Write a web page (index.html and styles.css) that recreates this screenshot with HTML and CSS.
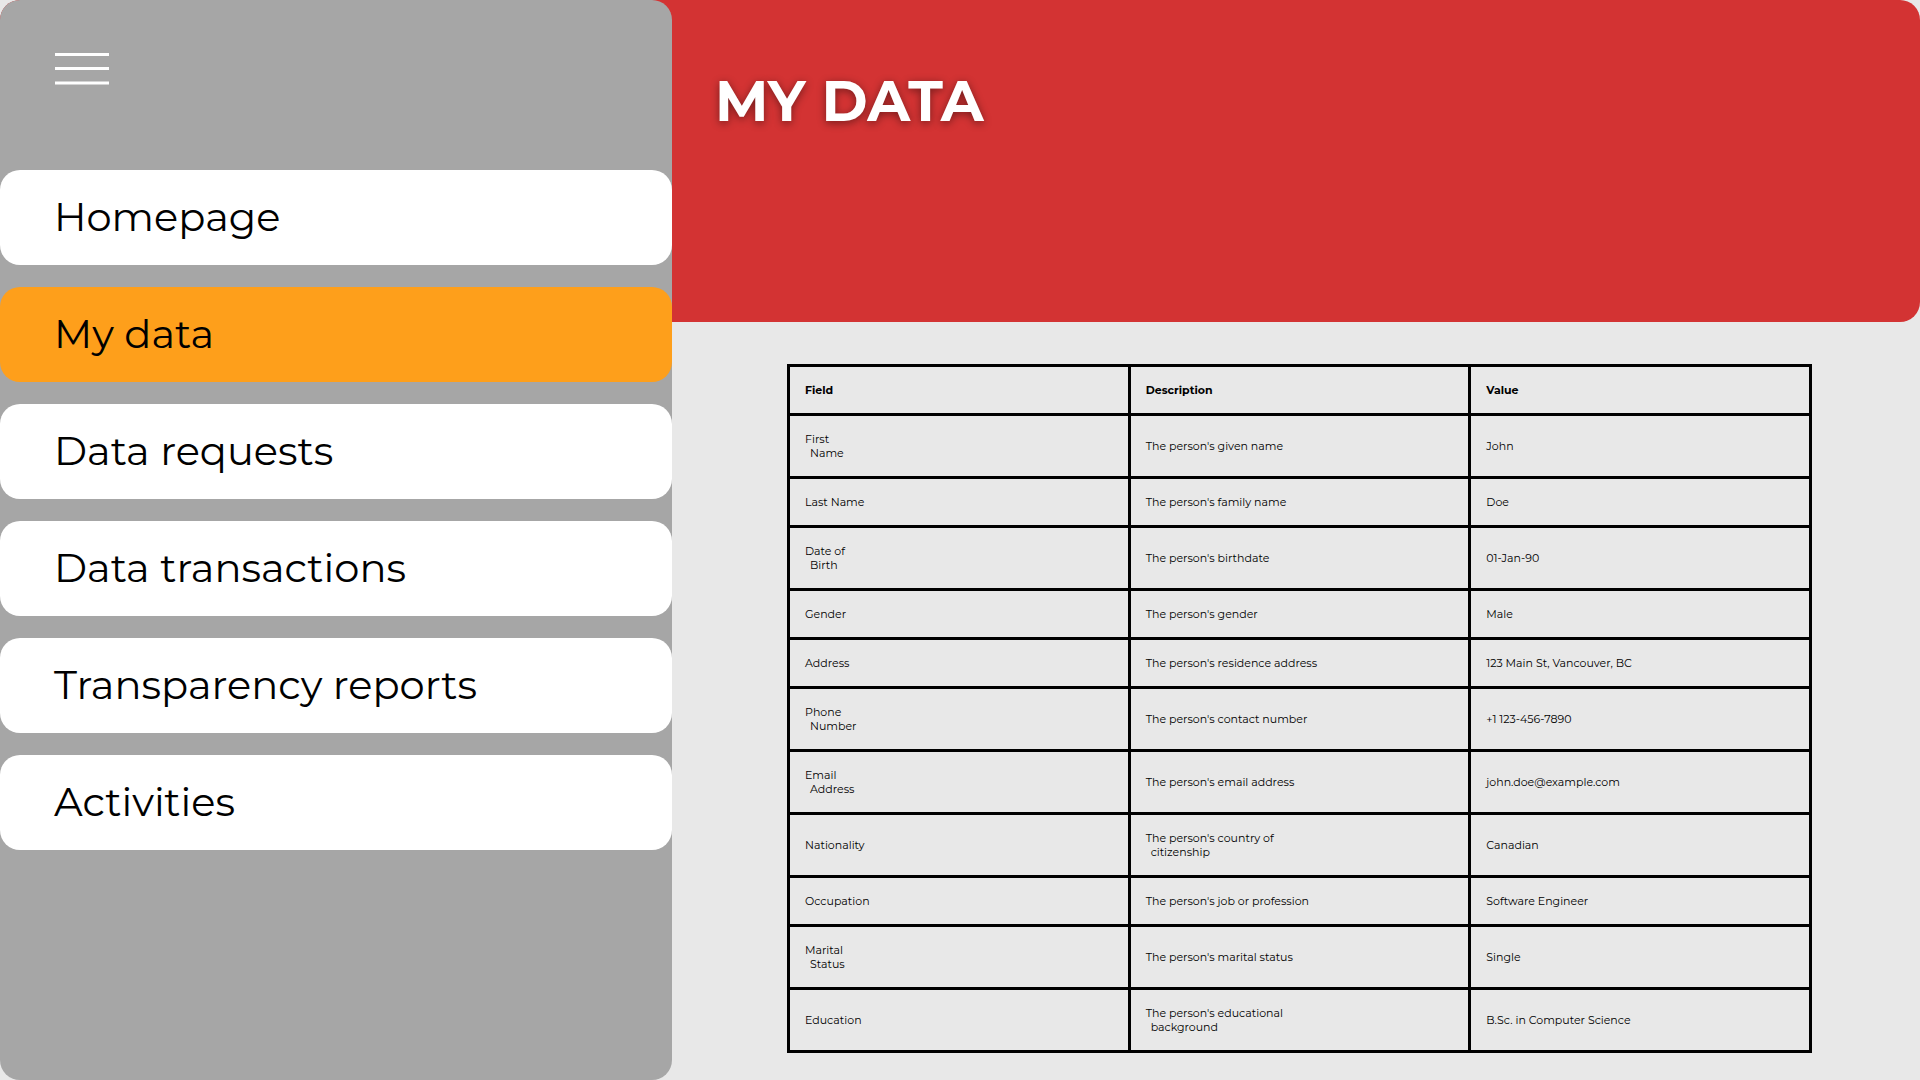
FILE: index.html
```html
<!DOCTYPE html>
<html lang="en">
<head>
<meta charset="utf-8">
<meta name="viewport" content="width=device-width, initial-scale=1">
<title>My data</title>
<link rel="stylesheet" href="styles.css">
</head>
<body>
<div class="layout">
  <header class="banner">
    <h1 class="banner-title">MY DATA</h1>
  </header>
  <aside class="sidebar">
    <button class="menu-button" type="button" aria-label="Toggle menu">
      <svg class="menu-icon" viewBox="0 0 54 32" aria-hidden="true">
        <path d="M0 1.500H54M0 15.500H54M0 30H54" stroke="#fff" stroke-width="3"/>
      </svg>
    </button>
    <nav class="nav" aria-label="Main">
      <a class="nav-link" href="#home">Homepage</a>
      <a class="nav-link nav-link-active" href="#my-data" aria-current="page">My data</a>
      <a class="nav-link" href="#requests">Data requests</a>
      <a class="nav-link" href="#transactions">Data transactions</a>
      <a class="nav-link" href="#reports">Transparency reports</a>
      <a class="nav-link" href="#activities">Activities</a>
    </nav>
  </aside>
  <main class="content">
    <table class="data-table">
      <thead>
        <tr><th scope="col">Field</th><th scope="col">Description</th><th scope="col">Value</th></tr>
      </thead>
      <tbody>
        <tr><td>First <span class="second-line">Name</span></td><td>The person's given name</td><td>John</td></tr>
        <tr><td>Last Name</td><td>The person's family name</td><td>Doe</td></tr>
        <tr><td>Date of <span class="second-line">Birth</span></td><td>The person's birthdate</td><td>01-Jan-90</td></tr>
        <tr><td>Gender</td><td>The person's gender</td><td>Male</td></tr>
        <tr><td>Address</td><td>The person's residence address</td><td>123 Main St, Vancouver, BC</td></tr>
        <tr><td>Phone <span class="second-line">Number</span></td><td>The person's contact number</td><td>+1 123-456-7890</td></tr>
        <tr><td>Email <span class="second-line">Address</span></td><td>The person's email address</td><td>john.doe@example.com</td></tr>
        <tr><td>Nationality</td><td>The person's country of <span class="second-line">citizenship</span></td><td>Canadian</td></tr>
        <tr><td>Occupation</td><td>The person's job or profession</td><td>Software Engineer</td></tr>
        <tr><td>Marital <span class="second-line">Status</span></td><td>The person's marital status</td><td>Single</td></tr>
        <tr><td>Education</td><td>The person's educational <span class="second-line">background</span></td><td>B.Sc. in Computer Science</td></tr>
      </tbody>
    </table>
  </main>
</div>
</body>
</html>
```
FILE: styles.css
```css
* {
  box-sizing: border-box;
}

body {
  margin: 0;
  background: #e8e8e8;
  color: #000;
  font-family: Montserrat, Inter, sans-serif;
}

/* The banner runs the full width, behind the sidebar. */
.layout {
  display: grid;
  grid-template-columns: 35% 1fr;
  grid-template-rows: auto 1fr;
  min-height: 100vh;
}

.banner {
  grid-column: 1 / -1;
  grid-row: 1;
  min-height: 322px;
  padding: 65px 44px 0 calc(35% + 43px);
  border-radius: 20px;
  background: #d33333;
}

.banner-title {
  margin: 0;
  color: #fff;
  font-size: 56px;
  font-weight: 700;
  line-height: 72px;
  text-shadow: 0 2px 8px rgba(0, 0, 0, 0.45);
}

.sidebar {
  grid-column: 1;
  grid-row: 1 / -1;
  padding-top: 53px;
  border-radius: 20px;
  background: #a6a6a6;
}

.menu-button {
  display: block;
  margin: 0 0 85px 55px;
  padding: 0;
  border: 0;
  background: none;
  cursor: pointer;
}

.menu-icon {
  display: block;
  width: 54px;
  height: 32px;
}

.nav {
  display: grid;
  gap: 22px;
}

.nav-link {
  padding: 20px 54px 21px;
  border-radius: 20px;
  background: #fff;
  color: #000;
  font-size: 40px;
  line-height: 54px;
  text-decoration: none;
}

.nav-link-active {
  background: #fe9f1b;
}

.content {
  grid-column: 2;
  grid-row: 2;
  padding: 42px 108px 27px 115px;
}

.data-table {
  width: 100%;
  border-collapse: collapse;
  table-layout: fixed;
  font-size: 11px;
  line-height: 14px;
}

.data-table th,
.data-table td {
  padding: 16px 16px 16px 15px;
  border: 3px solid #000;
  text-align: left;
  vertical-align: middle;
}

.second-line {
  display: block;
  padding-left: 5px;
}
```
